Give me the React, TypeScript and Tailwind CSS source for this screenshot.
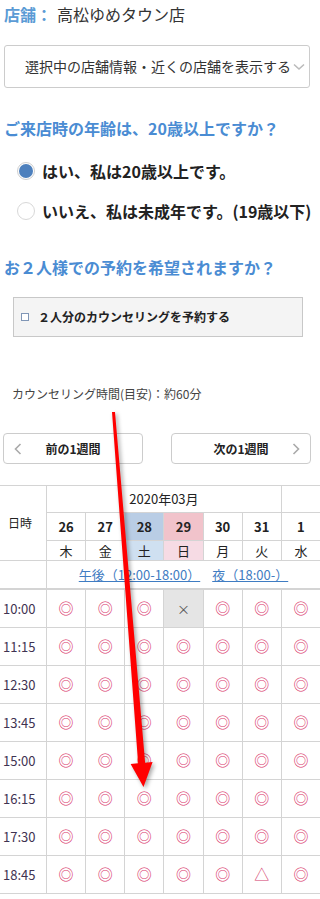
import React from "react";

const days = [
  { d: "26", w: "木", dbg: "bg-white", wbg: "bg-white" },
  { d: "27", w: "金", dbg: "bg-white", wbg: "bg-white" },
  { d: "28", w: "土", dbg: "bg-[#b9cde5]", wbg: "bg-[#cfe0f1]" },
  { d: "29", w: "日", dbg: "bg-[#f1c3cb]", wbg: "bg-[#f6dbe4]" },
  { d: "30", w: "月", dbg: "bg-white", wbg: "bg-white" },
  { d: "31", w: "火", dbg: "bg-white", wbg: "bg-white" },
  { d: "1", w: "水", dbg: "bg-white", wbg: "bg-white" },
];

const rows: { t: string; s: string[] }[] = [
  { t: "10:00", s: ["o", "o", "o", "x", "o", "o", "o"] },
  { t: "11:15", s: ["o", "o", "o", "o", "o", "o", "o"] },
  { t: "12:30", s: ["o", "o", "o", "o", "o", "o", "o"] },
  { t: "13:45", s: ["o", "o", "o", "o", "o", "o", "o"] },
  { t: "15:00", s: ["o", "o", "o", "o", "o", "o", "o"] },
  { t: "16:15", s: ["o", "o", "o", "o", "o", "o", "o"] },
  { t: "17:30", s: ["o", "o", "o", "o", "o", "o", "o"] },
  { t: "18:45", s: ["o", "o", "o", "o", "o", "t", "o"] },
];

function Cell({ s }: { s: string }) {
  if (s === "x")
    return (
      <div className="bg-[#e5e5e5] flex items-center justify-center text-[#555] text-[13px]">
        ×
      </div>
    );
  if (s === "t")
    return (
      <div className="bg-white flex items-center justify-center text-[#d33a6a] text-[15px]">
        △
      </div>
    );
  return (
    <div className="bg-white flex items-center justify-center text-[#d9356b] text-[15px]">
      ◎
    </div>
  );
}

export default function App() {
  return (
    <div
      className="relative w-[320px] h-[899px] overflow-hidden bg-white text-[#333]"
      style={{ fontFamily: '"Noto Sans CJK JP", "Noto Sans", sans-serif' }}
    >
      <div className="pl-[4px] pt-[2px] h-[26px] text-[16px] leading-[24px] whitespace-nowrap">
        <span className="font-bold text-[#5b9bd5]">店舗：</span>
        <span className="ml-[5px]">高松ゆめタウン店</span>
      </div>

      <div className="mt-[19px] ml-[4px] w-[306px] h-[43px] border border-[#cccccc] rounded-[3px] flex items-center pl-[20px] text-[14px] whitespace-nowrap">
        <span>選択中の店舗情報・近くの店舗を表示する</span>
        <svg width="12" height="8" viewBox="0 0 12 8" className="ml-[2px]">
          <polyline points="1,1.5 6,6 11,1.5" fill="none" stroke="#bbbbbb" strokeWidth="1.6" />
        </svg>
      </div>

      <div className="mt-[28px] pl-[4px] text-[16px] leading-[24px] font-bold text-[#4a8cd3] whitespace-nowrap">
        ご来店時の年齢は、20歳以上ですか？
      </div>

      <div className="mt-[19px] pl-[17px] flex items-center gap-[7px] h-[24px] whitespace-nowrap">
        <span className="w-[18px] h-[18px] rounded-full border border-[#cfcfcf] bg-white flex items-center justify-center shrink-0">
          <span className="w-[14px] h-[14px] rounded-full bg-[#4d80bd]" />
        </span>
        <span className="text-[16px] font-bold text-[#222]">はい、私は20歳以上です。</span>
      </div>

      <div className="mt-[16px] pl-[17px] flex items-center gap-[7px] h-[24px] whitespace-nowrap">
        <span className="w-[18px] h-[18px] rounded-full border border-[#d8d8d8] bg-white shrink-0" />
        <span className="text-[16px] font-bold text-[#222]">いいえ、私は未成年です。(19歳以下)</span>
      </div>

      <div className="mt-[32px] pl-[4px] text-[16px] leading-[24px] font-bold text-[#4a8cd3] whitespace-nowrap">
        お２人様での予約を希望されますか？
      </div>

      <div className="mt-[18px] ml-[13px] w-[290px] h-[40px] bg-[#f4f4f4] border border-[#c8c8c8] flex items-center pl-[7px] gap-[9px]">
        <span className="w-[8px] h-[8px] border border-[#8096b6] bg-white shrink-0" />
        <span className="text-[12px] font-bold text-[#222] whitespace-nowrap">２人分のカウンセリングを予約する</span>
      </div>

      <div className="mt-[48px] pl-[12px] text-[12px] leading-[18px] text-[#444] whitespace-nowrap">
        カウンセリング時間(目安)：約60分
      </div>

      <div className="mt-[30px] flex gap-[28px] pl-[3px]">
        <div className="w-[140px] h-[31px] border border-[#cccccc] rounded-[4px] flex items-center px-[10px]">
          <svg width="8" height="12" viewBox="0 0 8 12" className="shrink-0">
            <polyline points="6.5,1 1.5,6 6.5,11" fill="none" stroke="#aaaaaa" strokeWidth="1.6" />
          </svg>
          <span className="flex-1 text-center text-[12px] font-bold text-[#222]">前の1週間</span>
          <span className="w-[8px] shrink-0" />
        </div>
        <div className="w-[140px] h-[31px] border border-[#cccccc] rounded-[4px] flex items-center px-[10px]">
          <span className="w-[8px] shrink-0" />
          <span className="flex-1 text-center text-[12px] font-bold text-[#222]">次の1週間</span>
          <svg width="8" height="12" viewBox="0 0 8 12" className="shrink-0">
            <polyline points="1.5,1 6.5,6 1.5,11" fill="none" stroke="#aaaaaa" strokeWidth="1.6" />
          </svg>
        </div>
      </div>

      <div className="mt-[21px] grid grid-cols-[46px_repeat(7,minmax(0,1fr))] grid-rows-[26px_27px_19px_27px] gap-px bg-[#d4d4d4] border-y border-[#d4d4d4] text-[13px] text-[#222]">
        <div className="row-span-3 bg-white flex items-center justify-center pr-[6px] text-[12px]">日時</div>
        <div className="col-span-6 bg-white flex items-center justify-center">2020年03月</div>
        <div className="bg-white" />
        {days.map((d) => (
          <div key={d.d} className={`${d.dbg} flex items-center justify-center font-bold`}>
            {d.d}
          </div>
        ))}
        {days.map((d) => (
          <div key={d.w} className={`${d.wbg} flex items-center justify-center`}>
            {d.w}
          </div>
        ))}
        <div className="bg-white" />
        <div className="col-span-7 bg-white flex items-center justify-center gap-[12px] text-[#3f7cc2] whitespace-nowrap">
          <span className="underline">午後（12:00-18:00）</span>
          <span className="underline">夜（18:00-）</span>
        </div>
      </div>

      <div className="grid grid-cols-[46px_repeat(7,minmax(0,1fr))] auto-rows-[37px] gap-px bg-[#d4d4d4] border-y border-[#d4d4d4]">
        {rows.map((r) => (
          <React.Fragment key={r.t}>
            <div className="bg-white flex items-center pl-[3px] text-[13px] text-[#3f3352]">{r.t}</div>
            {r.s.map((s, i) => (
              <Cell key={i} s={s} />
            ))}
          </React.Fragment>
        ))}
      </div>

      <svg
        className="absolute left-0 top-0 pointer-events-none drop-shadow-[2px_2px_2px_rgba(0,0,0,0.35)]"
        width="320"
        height="899"
        viewBox="0 0 320 899"
      >
        <polygon
          points="112,412.1 115,411.9 145.1,762.7 152.6,762.1 143.5,787 130.6,763.9 138.1,763.3"
          fill="#ff0000"
        />
      </svg>
    </div>
  );
}
